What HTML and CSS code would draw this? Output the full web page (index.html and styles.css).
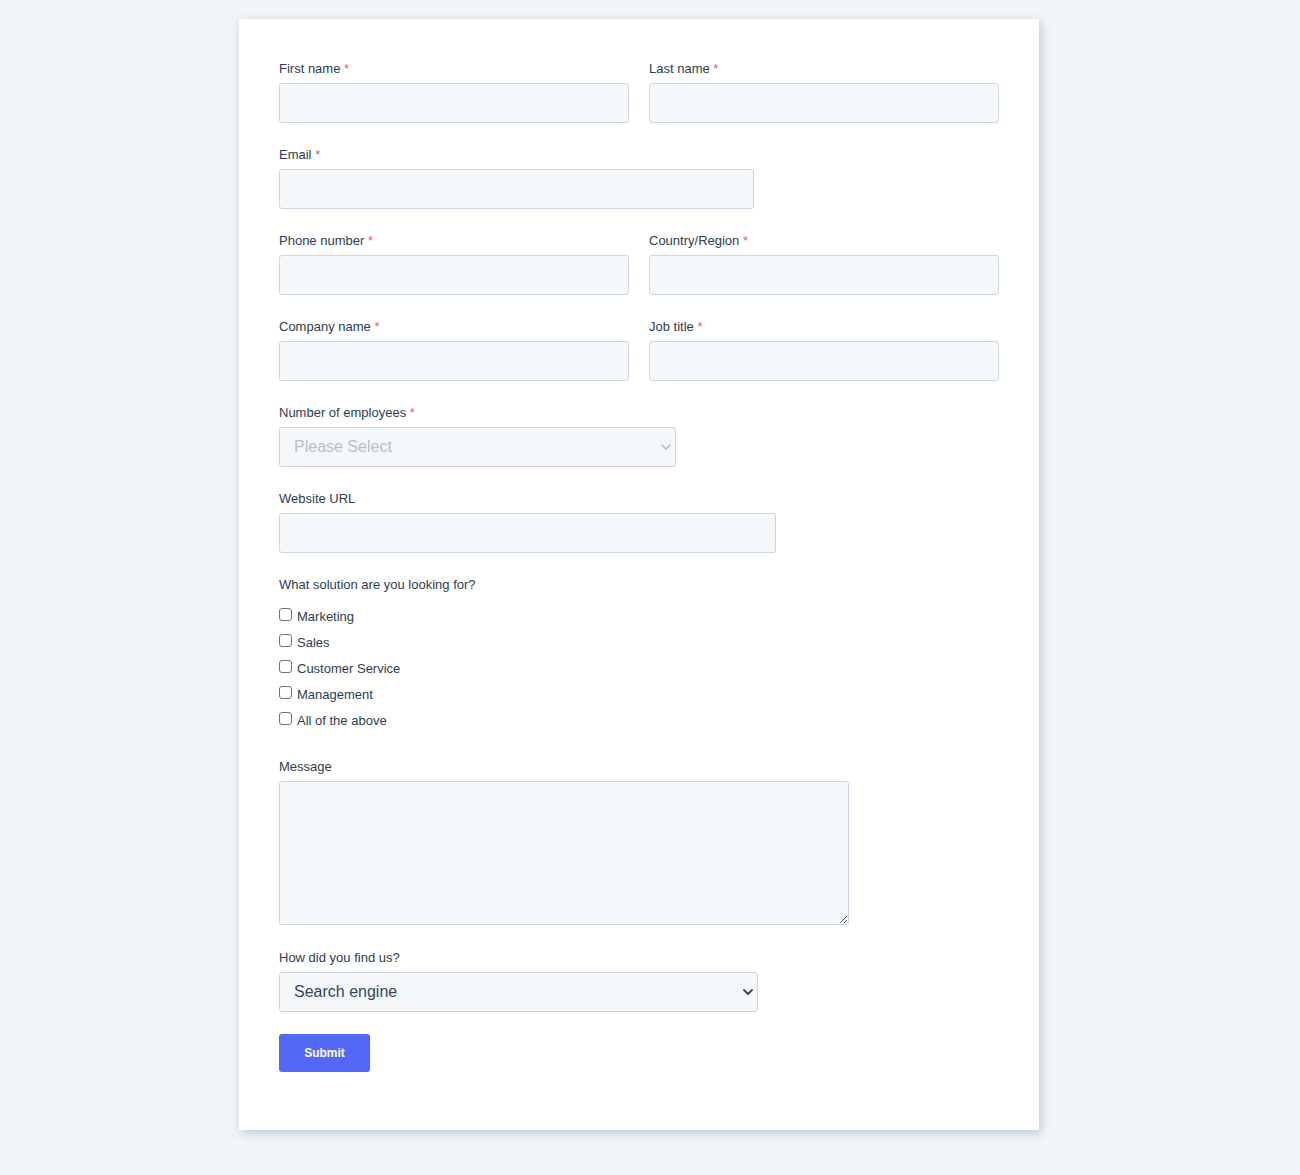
FILE: index.html
```html
<!DOCTYPE html>
<html lang="en">
<head>
<meta charset="utf-8">
<title>Contact form</title>
<link rel="stylesheet" href="styles.css">
</head>
<body>
<main class="card">
  <form class="form">
    <div class="row">
      <div class="field">
        <label class="label">First name <span class="req">*</span></label>
        <input class="input" type="text">
      </div>
      <div class="field">
        <label class="label">Last name <span class="req">*</span></label>
        <input class="input" type="text">
      </div>
    </div>
    <div class="field field-email">
      <label class="label">Email <span class="req">*</span></label>
      <input class="input" type="email">
    </div>
    <div class="row">
      <div class="field">
        <label class="label">Phone number <span class="req">*</span></label>
        <input class="input" type="text">
      </div>
      <div class="field">
        <label class="label">Country/Region <span class="req">*</span></label>
        <input class="input" type="text">
      </div>
    </div>
    <div class="row">
      <div class="field">
        <label class="label">Company name <span class="req">*</span></label>
        <input class="input" type="text">
      </div>
      <div class="field">
        <label class="label">Job title <span class="req">*</span></label>
        <input class="input" type="text">
      </div>
    </div>
    <div class="field field-employees">
      <label class="label">Number of employees <span class="req">*</span></label>
      <div class="select-wrap">
        <select class="input select placeholder"><option>Please Select</option></select>
        <svg class="chevron chevron-light" width="10" height="6" viewBox="0 0 10 6"><path d="M1 1l4 4 4-4" fill="none" stroke="currentColor" stroke-width="1.4" stroke-linecap="round" stroke-linejoin="round"/></svg>
      </div>
    </div>
    <div class="field field-url">
      <label class="label">Website URL</label>
      <input class="input" type="text">
    </div>
    <div class="field field-checks">
      <label class="label">What solution are you looking for?</label>
      <ul class="checks">
        <li class="check"><input type="checkbox" class="box"><span>Marketing</span></li>
        <li class="check"><input type="checkbox" class="box"><span>Sales</span></li>
        <li class="check"><input type="checkbox" class="box"><span>Customer Service</span></li>
        <li class="check"><input type="checkbox" class="box"><span>Management</span></li>
        <li class="check"><input type="checkbox" class="box"><span>All of the above</span></li>
      </ul>
    </div>
    <div class="field field-message">
      <label class="label">Message</label>
      <textarea class="input textarea"></textarea>
    </div>
    <div class="field field-find">
      <label class="label">How did you find us?</label>
      <div class="select-wrap">
        <select class="input select"><option>Search engine</option></select>
        <svg class="chevron chevron-dark" width="10" height="6" viewBox="0 0 10 6"><path d="M1 1l4 4 4-4" fill="none" stroke="currentColor" stroke-width="1.8" stroke-linecap="round" stroke-linejoin="round"/></svg>
      </div>
    </div>
    <button type="button" class="submit">Submit</button>
  </form>
</main>
</body>
</html>
```
FILE: styles.css
```css
html, body {
  margin: 0;
  padding: 0;
}
body {
  background: #f2f6f9;
  font-family: "Liberation Sans", Arial, Helvetica, sans-serif;
  color: #33475b;
  min-height: 1175px;
}
.card {
  width: 800px;
  box-sizing: border-box;
  margin: 19px 0 0 239px;
  background: #ffffff;
  padding: 41px 40px 58px;
  box-shadow: 2px 3px 10px rgba(60, 85, 110, 0.3);
}
.form {
  display: flex;
  flex-direction: column;
  align-items: flex-start;
}
.row {
  display: flex;
  gap: 20px;
  width: 720px;
}
.row .field {
  flex: 1;
}
.field {
  display: flex;
  flex-direction: column;
  margin-bottom: 23px;
}
.label {
  font-size: 13px;
  line-height: 16px;
  padding-top: 1px;
  margin-bottom: 6px;
  color: #2d3e50;
}
.req {
  color: #f2545b;
}
.input {
  box-sizing: border-box;
  height: 40px;
  width: 100%;
  background: #f5f8fa;
  border: 1px solid #cbd6e2;
  border-radius: 3px;
  font-family: inherit;
  font-size: 16px;
  color: #33475b;
  padding: 0 14px;
  margin: 0;
  outline: none;
}
.field-email { width: 475px; }
.field-employees { width: 397px; }
.field-url { width: 497px; }
.field-message { width: 570px; margin-bottom: 24px; }
.field-find { width: 479px; margin-bottom: 22px; }
.field-checks { margin-bottom: 25px; }
.select-wrap {
  position: relative;
  width: 100%;
}
.select {
  appearance: none;
  -webkit-appearance: none;
  display: block;
  padding-left: 14px;
  line-height: 38px;
}
.placeholder {
  color: #b9bfc6;
}
.chevron {
  position: absolute;
  top: 17px;
  right: 5px;
  pointer-events: none;
}
.chevron-light { color: #b0b6bd; }
.chevron-dark { color: #33475b; }
.checks {
  list-style: none;
  margin: 4px 0 0;
  padding: 0;
}
.check {
  display: flex;
  align-items: center;
  height: 26px;
  font-size: 13px;
  color: #2d3e50;
}
.box {
  appearance: none;
  -webkit-appearance: none;
  width: 13px;
  height: 13px;
  margin: -3px 5px 0 0;
  border: 1px solid #6f7478;
  border-radius: 3px;
  background: #fff;
  box-sizing: border-box;
}
.textarea {
  height: 144px;
  resize: vertical;
  padding: 10px 14px;
}
.submit {
  width: 91px;
  height: 38px;
  background: #5468f8;
  color: #ffffff;
  border: none;
  border-radius: 3px;
  font-family: inherit;
  font-weight: bold;
  font-size: 12px;
  cursor: pointer;
  padding: 0;
}
```
